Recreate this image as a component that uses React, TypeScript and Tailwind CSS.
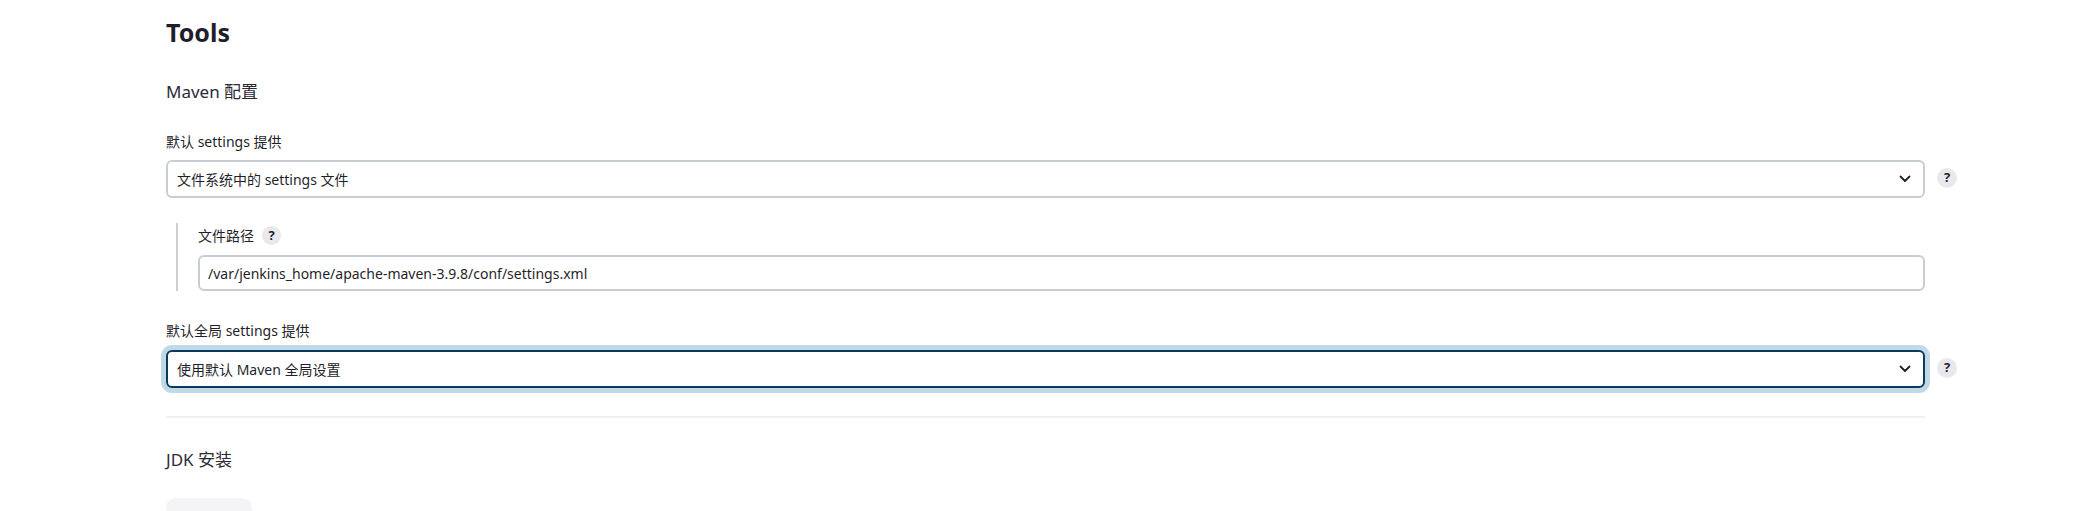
import React from 'react';

const font = { fontFamily: '"Noto Sans", "Noto Sans CJK SC", sans-serif' };

function Help({ small }: { small?: boolean }) {
  return (
    <span
      className={`inline-flex items-center justify-center rounded-full bg-[#e9e9ed] text-[#1f1f2b] font-bold leading-none ${
        small ? 'w-[19px] h-[19px] text-[13px]' : 'w-[20px] h-[20px] text-[13px]'
      }`}
    >
      ?
    </span>
  );
}

function Chevron() {
  return (
    <svg width="12" height="8" viewBox="0 0 12 8" fill="none">
      <path d="M1.5 1.5L6 6L10.5 1.5" stroke="#1f1f2b" strokeWidth="1.8" strokeLinecap="round" strokeLinejoin="round" />
    </svg>
  );
}

function Select({ value, focused }: { value: string; focused?: boolean }) {
  return (
    <div className="flex items-center">
      <div
        className={`w-[1759px] h-[38px] rounded-[6px] border-2 flex items-center justify-between pl-[9px] pr-[12px] text-[14px] text-[#1f1f2b] bg-white ${
          focused ? 'border-[#0b3a5c] shadow-[0_0_0_5px_#c1d9e7]' : 'border-[#c6ced3]'
        }`}
      >
        <span>{value}</span>
        <Chevron />
      </div>
      <div className="ml-[12px] -mt-[6px]">
        <Help />
      </div>
    </div>
  );
}

export default function App() {
  return (
    <div className="w-[2081px] h-[511px] bg-white overflow-hidden pl-[166px] text-[#1f1f2b]" style={font}>
      <h1 className="text-[25px] font-bold leading-none pt-[20px]">Tools</h1>

      <h2 className="text-[17px] leading-none mt-[38px] text-[#2b2b36]">Maven 配置</h2>

      <div className="mt-[35px] text-[14px] leading-none">默认 settings 提供</div>
      <div className="mt-[11px]">
        <Select value="文件系统中的 settings 文件" />
      </div>

      <div className="mt-[25px] ml-[10px] border-l-2 border-[#c9cfd3] pl-[20px] w-[1759px]">
        <div className="flex items-center gap-[8px] text-[14px] leading-none pt-[3px]">
          文件路径 <Help small />
        </div>
        <div className="mt-[10px] w-[1727px] h-[36px] rounded-[6px] border-2 border-[#c6ced3] flex items-center pl-[8px] text-[14px]">
          /var/jenkins_home/apache-maven-3.9.8/conf/settings.xml
        </div>
      </div>

      <div className="mt-[33px] text-[14px] leading-none">默认全局 settings 提供</div>
      <div className="mt-[12px]">
        <Select value="使用默认 Maven 全局设置" focused />
      </div>

      <div className="mt-[28px] w-[1759px] h-[2px] bg-[#f0f0f4]" />

      <h2 className="text-[17px] leading-none mt-[33px] text-[#2b2b36]">JDK 安装</h2>

      <div className="mt-[30px] w-[86px] h-[30px] rounded-[10px] bg-[#f4f4f6]" />
    </div>
  );
}
